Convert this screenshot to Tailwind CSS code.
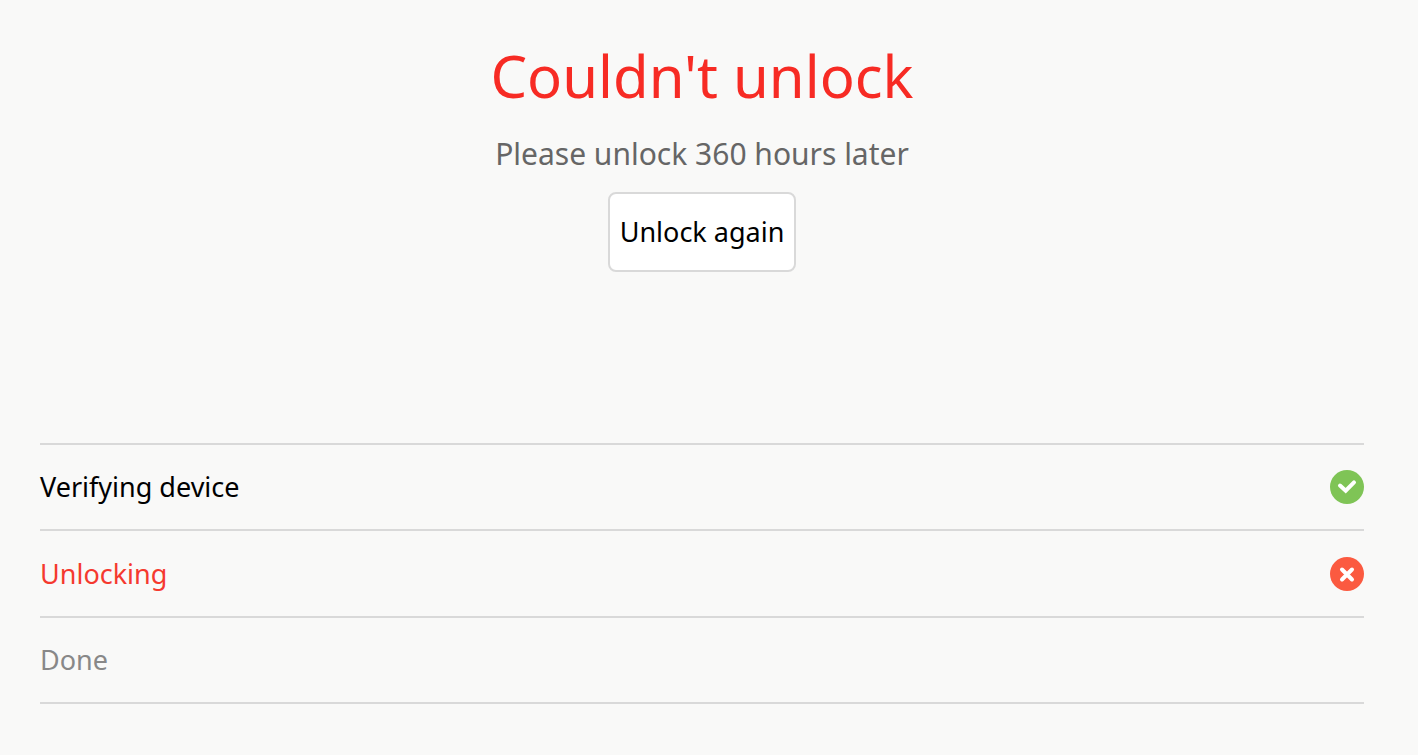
<!DOCTYPE html>
<html lang="en">
<head>
    <meta charset="UTF-8">
    <meta name="viewport" content="width=device-width, initial-scale=1.0">
    <title>Couldn't unlock</title>
    <script src="https://cdn.jsdelivr.net/npm/@tailwindcss/browser@4"></script>
</head>
<body class="bg-[#f9f9f8] text-black font-['Noto_Sans','Open_Sans',sans-serif] min-h-screen pl-10 pr-[54px] pt-10">

    <!-- Result -->
    <header class="flex flex-col items-center text-center">
        <h1 class="text-[58px] leading-[72px] text-[#f72b24]">Couldn't unlock</h1>
        <p class="mt-5 text-[30px] leading-[44px] text-[#666666]">Please unlock 360 hours later</p>
        <button type="button" class="mt-4 px-2.5 py-[18px] bg-white border-2 border-[#d9d9d9] rounded-lg text-[27px] leading-10 cursor-pointer hover:bg-gray-50">Unlock again</button>
    </header>

    <!-- Steps -->
    <ul class="mt-[171px] border-t-2 border-[#d9d9d9] text-[27px] leading-10">
        <li class="flex items-center justify-between h-[86px] border-b-2 border-[#d9d9d9]">
            <span>Verifying device</span>
            <svg class="size-[34px]" viewBox="0 0 34 34" fill="none" role="img" aria-label="Passed">
                <circle cx="17" cy="17" r="17" fill="#7fc456"/>
                <path d="M10 15.500l5.700 5.200 8.300-8.400" stroke="#fff" stroke-width="4" stroke-linecap="round"/>
            </svg>
        </li>
        <li class="flex items-center justify-between h-[87px] border-b-2 border-[#d9d9d9] text-[#f5392f]">
            <span>Unlocking</span>
            <svg class="size-[34px]" viewBox="0 0 34 34" fill="none" role="img" aria-label="Failed">
                <circle cx="17" cy="17" r="17" fill="#fb5a40"/>
                <path d="M12 12.500l10 10M22 12.500l-10 10" stroke="#fff" stroke-width="4" stroke-linecap="round"/>
            </svg>
        </li>
        <li class="flex items-center justify-between h-[86px] border-b-2 border-[#d9d9d9] text-[#888888]">
            <span>Done</span>
        </li>
    </ul>

</body>
</html>
